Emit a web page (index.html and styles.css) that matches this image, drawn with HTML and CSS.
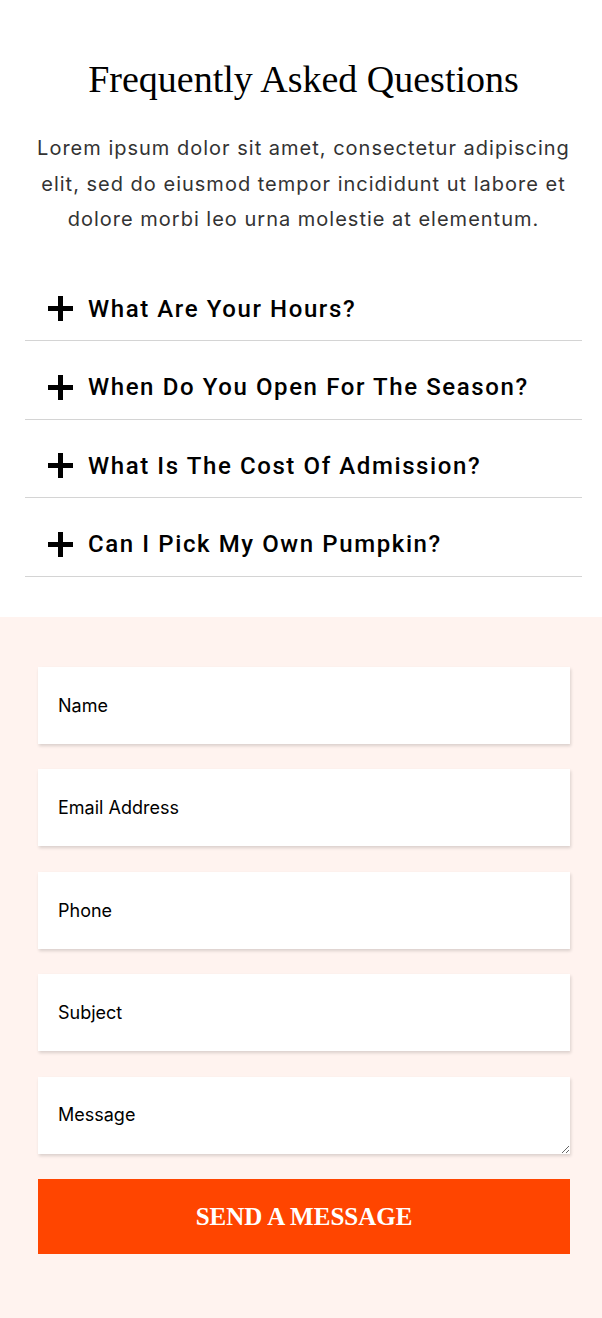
FILE: index.html
```html
<!DOCTYPE html>
<html lang="en">
<head>
    <meta charset="UTF-8">
    <meta name="viewport" content="width=device-width, initial-scale=1.0">
    <title>Frequently Asked Questions</title>
<link rel="stylesheet" href="styles.css">
</head>
<body>
    <section class="faq">
        <h2>Frequently Asked Questions</h2>
        <p class="intro">Lorem ipsum dolor sit amet, consectetur adipiscing elit, sed do eiusmod tempor incididunt ut labore et dolore morbi leo urna molestie at elementum.</p>

        <!-- Accordion -->
        <div class="faq-list">
            <div class="faq-item">
                <span class="plus"></span>
                <span class="faq-title">What Are Your Hours?</span>
            </div>
            <div class="faq-item">
                <span class="plus"></span>
                <span class="faq-title">When Do You Open For The Season?</span>
            </div>
            <div class="faq-item">
                <span class="plus"></span>
                <span class="faq-title">What Is The Cost Of Admission?</span>
            </div>
            <div class="faq-item">
                <span class="plus"></span>
                <span class="faq-title">Can I Pick My Own Pumpkin?</span>
            </div>
        </div>
    </section>

    <section class="contact">
        <form class="contact-form">
            <input type="text" placeholder="Name">
            <input type="email" placeholder="Email Address">
            <input type="tel" placeholder="Phone">
            <input type="text" placeholder="Subject">
            <textarea placeholder="Message"></textarea>
            <button type="submit">SEND A MESSAGE</button>
        </form>
    </section>
</body>
</html>
```

FILE: styles.css
```css
html {
    background-color: #fff3ef;
}

body {
    margin: 0;
    padding: 0;
    font-family: Inter, "DM Sans", sans-serif;
    color: #000;
}

.faq {
    background-color: #fff;
    padding: 56px 20px 40px 25px;
    text-align: center;
}

h2 {
    margin: 0 0 29px;
    font-family: "Liberation Serif", serif;
    font-weight: normal;
    font-size: 38px;
    line-height: 46px;
    color: #000;
}

.intro {
    margin: 0 0 25px;
    font-size: 20px;
    line-height: 35.5px;
    letter-spacing: 1px;
    color: #333;
}

.faq-item {
    display: flex;
    align-items: center;
    gap: 15px;
    padding: 27px 0 12.5px 23px;
    border-bottom: 1px solid #d4d4d4;
    text-align: left;
}

/* Plus icon drawn with two bars */
.plus {
    position: relative;
    width: 25px;
    height: 25px;
    flex-shrink: 0;
}

.plus::before, .plus::after {
    content: "";
    position: absolute;
    background-color: #000;
}

.plus::before {
    left: 0;
    top: 10px;
    width: 25px;
    height: 5px;
}

.plus::after {
    left: 10px;
    top: 0;
    width: 5px;
    height: 25px;
}

.faq-title {
    font-family: Roboto, sans-serif;
    font-weight: 500;
    font-size: 24px;
    line-height: 38px;
    letter-spacing: 1.6px;
}

.contact {
    padding: 50px 32px 65px 38px;
}

.contact-form {
    display: flex;
    flex-direction: column;
    gap: 25.5px;
}

input, textarea {
    box-sizing: border-box;
    width: 100%;
    height: 77px;
    padding: 0 20px;
    border: none;
    background-color: #fff;
    box-shadow: 1px 2px 3px rgba(0, 0, 0, 0.15);
    font-family: Inter, "DM Sans", sans-serif;
    font-size: 18px;
    color: #000;
    outline: none;
}

textarea {
    padding-top: 27px;
    resize: vertical;
}

input::placeholder, textarea::placeholder {
    color: #000;
}

button {
    height: 75px;
    border: none;
    background-color: #ff4500;
    color: #fff;
    font-family: "Liberation Serif", serif;
    font-weight: bold;
    font-size: 25px;
    cursor: pointer;
}
```
